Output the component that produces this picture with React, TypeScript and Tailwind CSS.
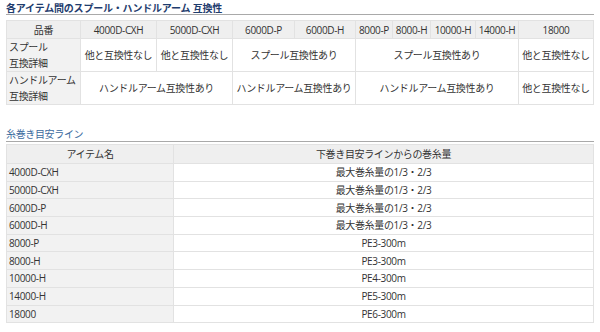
const sizes = ['4000D-CXH', '5000D-CXH', '6000D-P', '6000D-H', '8000-P', '8000-H', '10000-H', '14000-H', '18000'];

const lineRows = [
  { item: '4000D-CXH', amount: '最大巻糸量の1/3・2/3' },
  { item: '5000D-CXH', amount: '最大巻糸量の1/3・2/3' },
  { item: '6000D-P', amount: '最大巻糸量の1/3・2/3' },
  { item: '6000D-H', amount: '最大巻糸量の1/3・2/3' },
  { item: '8000-P', amount: 'PE3-300m' },
  { item: '8000-H', amount: 'PE3-300m' },
  { item: '10000-H', amount: 'PE4-300m' },
  { item: '14000-H', amount: 'PE5-300m' },
  { item: '18000', amount: 'PE6-300m' },
];

const colWidths = [74, 76, 76, 62, 61, 37, 38, 45, 43, 75];

const cell = 'border border-[#e2e2e2] text-center align-middle px-[1px] whitespace-nowrap leading-[14px]';
const labelCell = 'border border-[#e2e2e2] bg-[#f2f2f2] text-left align-middle px-[2px] leading-[16px] whitespace-nowrap';

export default function App() {
  return (
    <div className="bg-white w-[600px] h-[332px] px-[6px] text-[10px] tracking-[-0.35px] text-[#333] font-['Open_Sans','Noto_Sans_CJK_JP',sans-serif]">
      <h2 className="pt-[2px] h-[15px] border-b border-[#a9a9a9] font-bold text-[#1f3d6e] leading-[12px] tracking-[-0.2px]">
        各アイテム間のスプール・ハンドルアーム 互換性
      </h2>

      <table className="mt-[5px] w-[588px] table-fixed border-collapse">
        <colgroup>
          {colWidths.map((w, i) => (
            <col key={i} style={{ width: w }} />
          ))}
        </colgroup>
        <thead>
          <tr className="h-[18px] bg-[#efefef]">
            <th className={`${cell} font-normal`}>品番</th>
            {sizes.map((s) => (
              <th key={s} className={`${cell} font-normal`}>
                {s}
              </th>
            ))}
          </tr>
        </thead>
        <tbody>
          <tr className="h-[33px]">
            <td className={labelCell}>
              スプール
              <br />
              互換詳細
            </td>
            <td className={cell}>他と互換性なし</td>
            <td className={cell}>他と互換性なし</td>
            <td className={cell} colSpan={2}>スプール互換性あり</td>
            <td className={cell} colSpan={4}>スプール互換性あり</td>
            <td className={cell}>他と互換性なし</td>
          </tr>
          <tr className="h-[33px]">
            <td className={labelCell}>
              ハンドルアーム
              <br />
              互換詳細
            </td>
            <td className={cell} colSpan={2}>ハンドルアーム互換性あり</td>
            <td className={cell} colSpan={2}>ハンドルアーム互換性あり</td>
            <td className={cell} colSpan={4}>ハンドルアーム互換性あり</td>
            <td className={cell}>他と互換性なし</td>
          </tr>
        </tbody>
      </table>

      <h2 className="mt-[18px] pt-[5px] h-[19px] border-b border-[#a9a9a9] text-[#3a6a9e] leading-[12px]">
        糸巻き目安ライン
      </h2>

      <table className="mt-[2px] w-[588px] table-fixed border-collapse">
        <colgroup>
          <col style={{ width: 167 }} />
          <col />
        </colgroup>
        <thead>
          <tr className="h-[19px] bg-[#efefef]">
            <th className={`${cell} font-normal`}>アイテム名</th>
            <th className={`${cell} font-normal`}>下巻き目安ラインからの巻糸量</th>
          </tr>
        </thead>
        <tbody>
          {lineRows.map((r) => (
            <tr key={r.item} className="h-[17.7px]">
              <td className="border border-[#e2e2e2] bg-[#f2f2f2] text-left px-[2px] leading-[14px]">{r.item}</td>
              <td className={cell}>{r.amount}</td>
            </tr>
          ))}
        </tbody>
      </table>
    </div>
  );
}
